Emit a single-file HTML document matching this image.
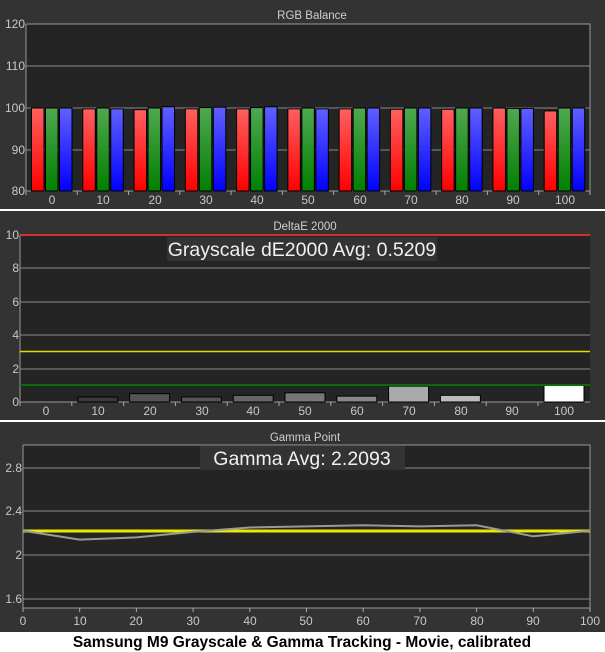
<!DOCTYPE html>
<html><head><meta charset="utf-8"><style>
html,body{margin:0;padding:0;background:#fff;}
svg{display:block;font-family:"Liberation Sans","DejaVu Sans",sans-serif;}
.l{fill:#c8c8c8;font-size:12px;}
.t{fill:#d0d0d0;font-size:11.5px;}
.big{fill:#f0f0f0;font-size:19.5px;}
</style></head><body>
<svg id="s" width="605" height="652" viewBox="0 0 605 652" xmlns="http://www.w3.org/2000/svg">
<defs>
<linearGradient id="gr" x1="0" y1="0" x2="0" y2="1"><stop offset="0" stop-color="#ff6060"/><stop offset="1" stop-color="#ff0000"/></linearGradient>
<linearGradient id="gg" x1="0" y1="0" x2="0" y2="1"><stop offset="0" stop-color="#50a850"/><stop offset="1" stop-color="#008000"/></linearGradient>
<linearGradient id="gb" x1="0" y1="0" x2="0" y2="1"><stop offset="0" stop-color="#6060ff"/><stop offset="1" stop-color="#0000ff"/></linearGradient>
</defs>
<rect x="0" y="0" width="605" height="632" fill="#333"/>
<rect x="0" y="209" width="605" height="2" fill="#fff"/>
<rect x="0" y="420" width="605" height="2" fill="#fff"/>
<rect x="26" y="24" width="564" height="167" fill="#242424"/>
<rect x="20" y="235" width="570" height="167" fill="#242424"/>
<rect x="23" y="445" width="567" height="163" fill="#242424"/>
<g id="g"></g>
<text class="t" x="312" y="19" text-anchor="middle">RGB Balance</text>
<text class="t" x="305" y="230" text-anchor="middle">DeltaE 2000</text>
<text class="t" x="305" y="441" text-anchor="middle">Gamma Point</text>
<g class="l" text-anchor="end">
<text x="25" y="28">120</text><text x="25" y="70">110</text><text x="25" y="112">100</text><text x="25" y="154">90</text><text x="25" y="195">80</text>
<text x="19" y="239">10</text><text x="19" y="272">8</text><text x="19" y="306">6</text><text x="19" y="339">4</text><text x="19" y="373">2</text><text x="19" y="406">0</text>
<text x="22" y="472">2.8</text><text x="22" y="515">2.4</text><text x="22" y="559">2</text><text x="22" y="603">1.6</text>
</g>
<g class="l" text-anchor="middle">
<text x="52" y="204">0</text><text x="103" y="204">10</text><text x="155" y="204">20</text><text x="206" y="204">30</text><text x="257" y="204">40</text><text x="308" y="204">50</text><text x="360" y="204">60</text><text x="411" y="204">70</text><text x="462" y="204">80</text><text x="513" y="204">90</text><text x="565" y="204">100</text>
<text x="46" y="415">0</text><text x="98" y="415">10</text><text x="150" y="415">20</text><text x="202" y="415">30</text><text x="253" y="415">40</text><text x="305" y="415">50</text><text x="357" y="415">60</text><text x="409" y="415">70</text><text x="461" y="415">80</text><text x="512" y="415">90</text><text x="564" y="415">100</text>
<text x="23" y="625">0</text><text x="80" y="625">10</text><text x="136" y="625">20</text><text x="193" y="625">30</text><text x="250" y="625">40</text><text x="306" y="625">50</text><text x="363" y="625">60</text><text x="420" y="625">70</text><text x="477" y="625">80</text><text x="533" y="625">90</text><text x="590" y="625">100</text>
</g>
<rect x="167" y="237" width="270" height="24" fill="#333"/>
<text class="big" x="302" y="256" text-anchor="middle">Grayscale dE2000 Avg: 0.5209</text>
<rect x="200" y="446" width="205" height="24" fill="#333"/>
<text class="big" x="302" y="465" text-anchor="middle">Gamma Avg: 2.2093</text>
<text x="302" y="647" text-anchor="middle" style="font-family:'Liberation Sans','DejaVu Sans',sans-serif;font-weight:bold;font-size:15.5px;fill:#000">Samsung M9 Grayscale &amp; Gamma Tracking - Movie, calibrated</text>
</svg>
<script>
var g=document.getElementById('g'),N='http://www.w3.org/2000/svg';
function el(t,a){var e=document.createElementNS(N,t);for(var k in a)e.setAttribute(k,a[k]);g.appendChild(e);return e;}
[66,108,150].forEach(function(y){el('line',{x1:26,x2:590,y1:y,y2:y,stroke:'#888'});});
el('polyline',{points:'26,24 590,24 590,191 26,191 26,24',fill:'none',stroke:'#999'});
var rv=[[100,100,100],[99.8,100,99.8],[99.6,100,100.3],[99.8,100.1,100.2],[99.8,100.1,100.3],[99.8,100,99.8],[99.8,100,100],[99.7,100,100],[99.7,100,100],[100,99.9,99.9],[99.3,100,100]];
for(var i=0;i<11;i++){var cx=26+51.27*i+4;for(var j=0;j<3;j++){var v=rv[i][j],y=108-(v-100)*4.175;el('rect',{x:cx+j*14+1.5,y:y,width:12.5,height:191-y,fill:['url(#gr)','url(#gg)','url(#gb)'][j],stroke:'#000','stroke-width':1});}
el('line',{x1:26+51.27*i,x2:26+51.27*i,y1:191,y2:195,stroke:'#aaa'});}
el('line',{x1:590,x2:590,y1:191,y2:195,stroke:'#aaa'});
[268,302,335,369].forEach(function(y){el('line',{x1:20,x2:590,y1:y,y2:y,stroke:'#888'});});
el('line',{x1:20,x2:20,y1:235,y2:402,stroke:'#999'});
el('line',{x1:20,x2:590,y1:402,y2:402,stroke:'#999'});
var dv=[0,0.3,0.5,0.3,0.4,0.55,0.35,0.95,0.4,0,1.0];
var cols=['#444','#3a3a3a','#555','#555','#666','#777','#888','#aaa','#bbb','#ccc','#fff'];
for(var i=0;i<11;i++){var x=20+51.8*i;if(dv[i]>0){var h=dv[i]*16.7;el('rect',{x:x+6,y:402-h,width:40,height:h,fill:cols[i],stroke:'#000'});}
el('line',{x1:x,x2:x,y1:402,y2:406,stroke:'#aaa'});}
el('line',{x1:20,x2:590,y1:351.5,y2:351.5,stroke:'#e0e000','stroke-width':1.5});
el('line',{x1:20,x2:590,y1:385,y2:385,stroke:'#0a6a0a','stroke-width':2});
el('line',{x1:20,x2:590,y1:235,y2:235,stroke:'#d03030','stroke-width':2});
[468,511,555,599].forEach(function(y){el('line',{x1:23,x2:590,y1:y,y2:y,stroke:'#888'});});
el('polyline',{points:'23,445 590,445 590,608 23,608 23,445',fill:'none',stroke:'#999'});
for(var i=0;i<=10;i++){var x=23+56.7*i;el('line',{x1:x,x2:x,y1:608,y2:612,stroke:'#aaa'});}
el('line',{x1:23,x2:590,y1:531,y2:531,stroke:'#e8e800','stroke-width':3});
var gv=[2.22,2.14,2.16,2.21,2.25,2.26,2.27,2.26,2.27,2.17,2.22],p=[];
for(var i=0;i<11;i++)p.push((23+56.7*i)+','+(555-(gv[i]-2)*110));
el('polyline',{points:p.join(' '),fill:'none',stroke:'#999','stroke-width':2});
</script>
</body></html>
